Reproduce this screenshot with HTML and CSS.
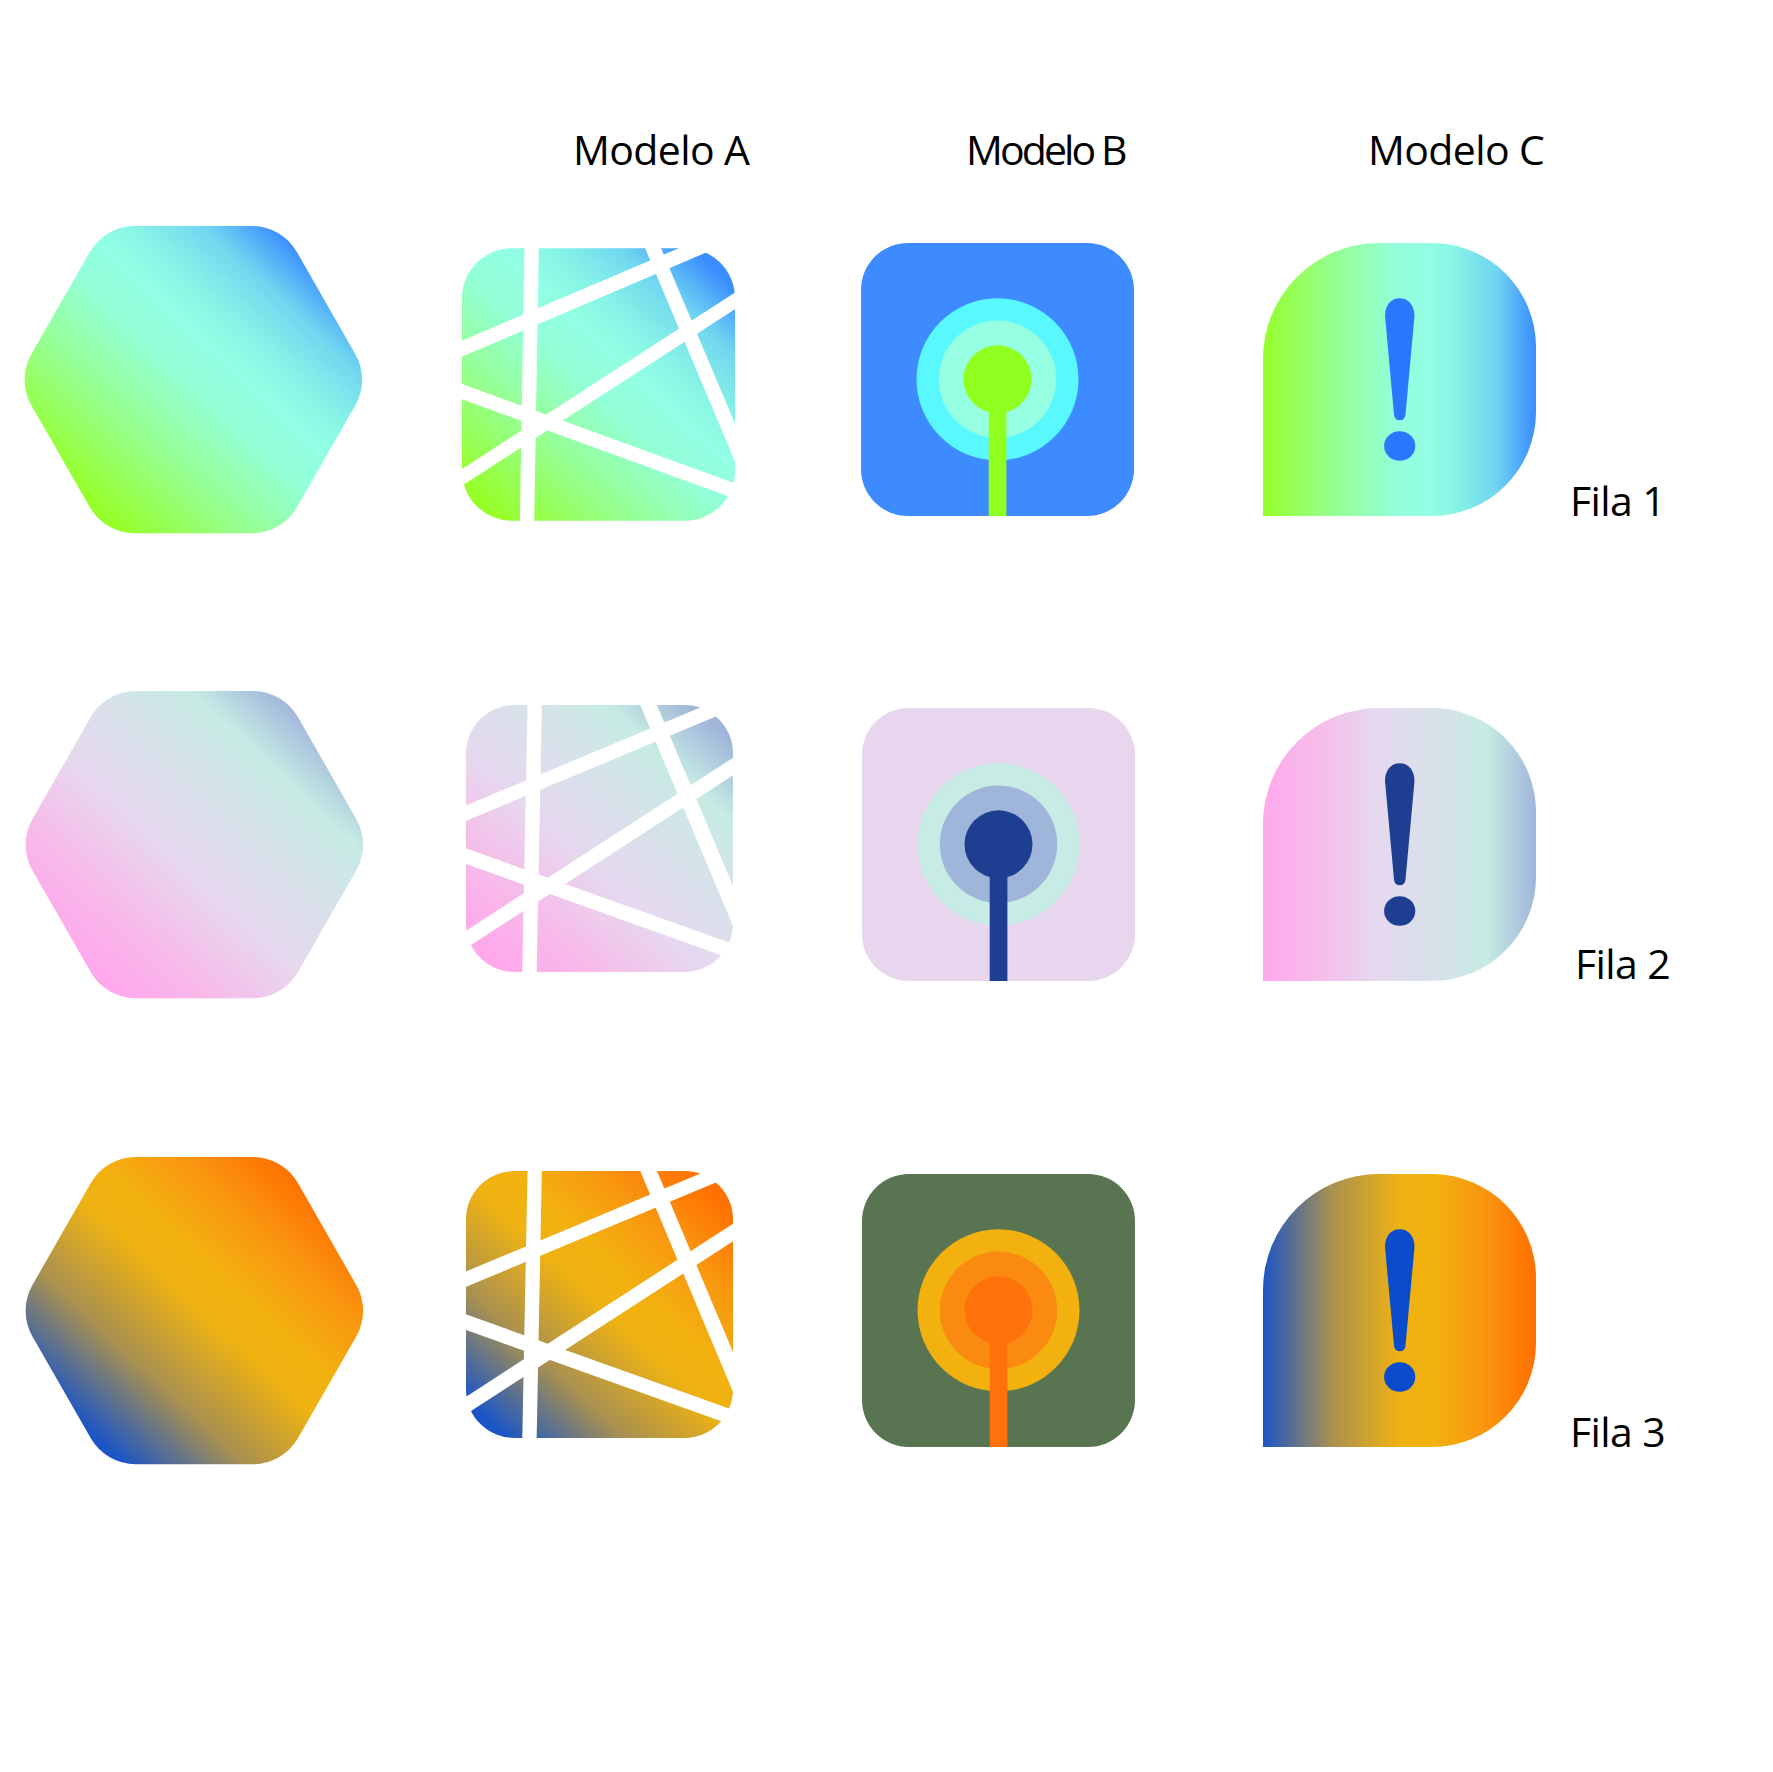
FILE: index.html
```html
<!DOCTYPE html>
<html lang="es">
<head>
<meta charset="utf-8">
<title>Modelos de iconos</title>
<link rel="stylesheet" href="styles.css">
</head>
<body>
<svg class="defs" aria-hidden="true">
  <defs>
    <linearGradient id="s1"><stop offset="0" stop-color="#96ff2a"/><stop offset=".25" stop-color="#96ff8e"/><stop offset=".48" stop-color="#93ffd8"/><stop offset=".6" stop-color="#93ffe4"/><stop offset=".7" stop-color="#88f4e6"/><stop offset=".85" stop-color="#70d6f0"/><stop offset="1" stop-color="#3a8cff"/></linearGradient>
    <linearGradient id="s2"><stop offset="0" stop-color="#ffa8ec"/><stop offset=".2" stop-color="#f6bce9"/><stop offset=".42" stop-color="#e6d8ef"/><stop offset=".62" stop-color="#d8e1ea"/><stop offset=".82" stop-color="#c6ebe4"/><stop offset="1" stop-color="#a0b5da"/></linearGradient>
    <linearGradient id="s3"><stop offset="0" stop-color="#1c55c6"/><stop offset=".25" stop-color="#a89050"/><stop offset=".5" stop-color="#eeb212"/><stop offset=".62" stop-color="#f2b10f"/><stop offset=".8" stop-color="#f99710"/><stop offset="1" stop-color="#ff7000"/></linearGradient>

    <linearGradient id="h1" href="#s1" gradientUnits="userSpaceOnUse" x1="60" y1="271" x2="284" y2="31"/>
    <linearGradient id="h2" href="#s2" gradientUnits="userSpaceOnUse" x1="60" y1="271" x2="284" y2="31"/>
    <linearGradient id="h3" href="#s3" gradientUnits="userSpaceOnUse" x1="60" y1="271" x2="284" y2="31"/>

    <linearGradient id="t1" href="#s1" x1=".09" y1=".94" x2=".91" y2=".06"/>
    <linearGradient id="t2" href="#s2" x1=".09" y1=".94" x2=".91" y2=".06"/>
    <linearGradient id="t3" href="#s3" x1=".09" y1=".94" x2=".91" y2=".06"/>

    <linearGradient id="c1" href="#s1"/>
    <linearGradient id="c2" href="#s2"/>
    <linearGradient id="c3" href="#s3"/>

    <path id="hexa" d="M109.7 0H227A52 52 0 0 1 271.9 26L330.1 127.7A52 52 0 0 1 330.1 179.7L271.9 281.3A52 52 0 0 1 227 307.3H109.7A52 52 0 0 1 64.8 281.3L6.6 179.7A52 52 0 0 1 6.6 127.7L64.8 26A52 52 0 0 1 109.7 0Z"/>

    <g id="lines1" class="cuts">
      <path stroke-width="43" d="M209 -10L195 828"/>
      <path stroke-width="44" d="M-50 323L850 -61"/>
      <path stroke-width="44" d="M552 -50L939 868"/>
      <path stroke-width="42" d="M-50 720L870 125"/>
      <path stroke-width="43" d="M-50 412L870 747"/>
    </g>
    <g id="lines2" class="cuts">
      <path stroke-width="43" d="M206 -10L190 810"/>
      <path stroke-width="42.5" d="M-50 345L850 -31"/>
      <path stroke-width="46" d="M526 -50L904 850"/>
      <path stroke-width="44" d="M-50 735L850 152"/>
      <path stroke-width="44" d="M-50 435L850 757"/>
    </g>

    <g id="beacon">
      <rect class="b-bg" width="273" height="273" rx="47"/>
      <circle class="b-outer" cx="136.5" cy="136.3" r="81"/>
      <circle class="b-mid" cx="136.5" cy="136.3" r="58.7"/>
      <circle class="b-dot" cx="136.5" cy="136.3" r="34"/>
      <rect class="b-dot" x="127.7" y="136" width="17.7" height="137"/>
    </g>

    <path id="drop" d="M0 273V116A116 116 0 0 1 116 0H169A104 104 0 0 1 273 104V169A104 104 0 0 1 169 273Z"/>
    <g id="bang">
      <path d="M136.7 55.3C146 55.3 151.5 63 151.5 73L142.5 171.5Q142 177.3 136.7 177.3Q131.5 177.3 131 171.5L122 73C122 63 127.5 55.3 136.7 55.3Z"/>
      <ellipse cx="136.7" cy="203" rx="15.6" ry="14.7"/>
    </g>
  </defs>
</svg>

<main class="sheet">
  <header class="heads">
    <div class="label">Modelo A</div>
    <div class="label label-narrow">Modelo B</div>
    <div class="label">Modelo C</div>
  </header>

  <section class="row r1">
    <svg class="hex" viewBox="0 0 337 307"><use href="#hexa" fill="url(#h1)"/></svg>
    <svg class="tile tile-large" viewBox="0 0 819 818"><rect width="819" height="818" rx="150" fill="url(#t1)"/><use href="#lines1"/></svg>
    <svg class="square" viewBox="0 0 273 273"><use href="#beacon"/></svg>
    <svg class="square" viewBox="0 0 273 273"><use href="#drop" fill="url(#c1)"/><use href="#bang" class="mark"/></svg>
    <div class="label fila">Fila 1</div>
  </section>

  <section class="row r2">
    <svg class="hex hex-in" viewBox="0 0 337 307"><use href="#hexa" fill="url(#h2)"/></svg>
    <svg class="tile" viewBox="0 0 800 800"><rect width="800" height="800" rx="145" fill="url(#t2)"/><use href="#lines2"/></svg>
    <svg class="square square-in" viewBox="0 0 273 273"><use href="#beacon"/></svg>
    <svg class="square" viewBox="0 0 273 273"><use href="#drop" fill="url(#c2)"/><use href="#bang" class="mark"/></svg>
    <div class="label fila fila-in">Fila 2</div>
  </section>

  <section class="row r3">
    <svg class="hex hex-in" viewBox="0 0 337 307"><use href="#hexa" fill="url(#h3)"/></svg>
    <svg class="tile" viewBox="0 0 800 800"><rect width="800" height="800" rx="145" fill="url(#t3)"/><use href="#lines2"/></svg>
    <svg class="square square-in" viewBox="0 0 273 273"><use href="#beacon"/></svg>
    <svg class="square" viewBox="0 0 273 273"><use href="#drop" fill="url(#c3)"/><use href="#bang" class="mark"/></svg>
    <div class="label fila">Fila 3</div>
  </section>
</main>
</body>
</html>
```

FILE: styles.css
```css
html, body {
  margin: 0;
  background: #fff;
}

.defs {
  position: absolute;
  width: 0;
  height: 0;
}

.sheet {
  width: 1773px;
  height: 1772px;
  padding-top: 129px;
  box-sizing: border-box;
  display: flex;
  flex-direction: column;
  gap: 158px;
}

.label {
  font-family: "Open Sans", "Noto Sans", sans-serif;
  font-size: 41px;
  line-height: 40px;
  letter-spacing: -0.6px;
  color: #000;
  white-space: nowrap;
}

.label-narrow {
  letter-spacing: -2.9px;
}

.heads {
  display: grid;
  grid-template-columns: 393px 402px auto;
  padding-left: 573px;
  height: 40px;
  margin-bottom: -101px;
}

.row {
  display: grid;
  grid-template-columns: 437px 399px 402px 307px 1fr;
  align-items: center;
  height: 307px;
  padding-left: 25px;
}

.row svg {
  display: block;
  overflow: visible;
}

.r3 {
  margin-top: 1px;
}

.hex {
  width: 337px;
  height: 307px;
}

.hex-in {
  margin-left: 1px;
}

.tile {
  width: 267px;
  height: 267px;
  margin-left: 4px;
  margin-bottom: 12px;
}

.tile-large {
  width: 273px;
  height: 273px;
  margin-left: 0;
  margin-bottom: 0;
  margin-top: 10px;
}

.square {
  width: 273px;
  height: 273px;
}

.square-in {
  margin-left: 0.5px;
}

.fila {
  align-self: end;
  margin-bottom: 13px;
}

.fila-in {
  margin-left: 5px;
  margin-bottom: 15px;
}

.cuts path {
  fill: none;
  stroke: #fff;
}

.b-bg { fill: var(--bg); }
.b-outer { fill: var(--outer); }
.b-mid { fill: var(--mid); }
.b-dot { fill: var(--dot); }
.mark { fill: var(--mark); }

.r1 {
  --bg: #3d8bff;
  --outer: #59f8ff;
  --mid: #96ffe1;
  --dot: #90ff20;
  --mark: #2a78ff;
}

.r2 {
  --bg: #e8d6ef;
  --outer: #c7ebe5;
  --mid: #a0b5da;
  --dot: #1e3f91;
  --mark: #1e3f91;
}

.r3 {
  --bg: #587451;
  --outer: #f2b10f;
  --mid: #fa8a10;
  --dot: #ff7209;
  --mark: #0a4ccc;
}
```
